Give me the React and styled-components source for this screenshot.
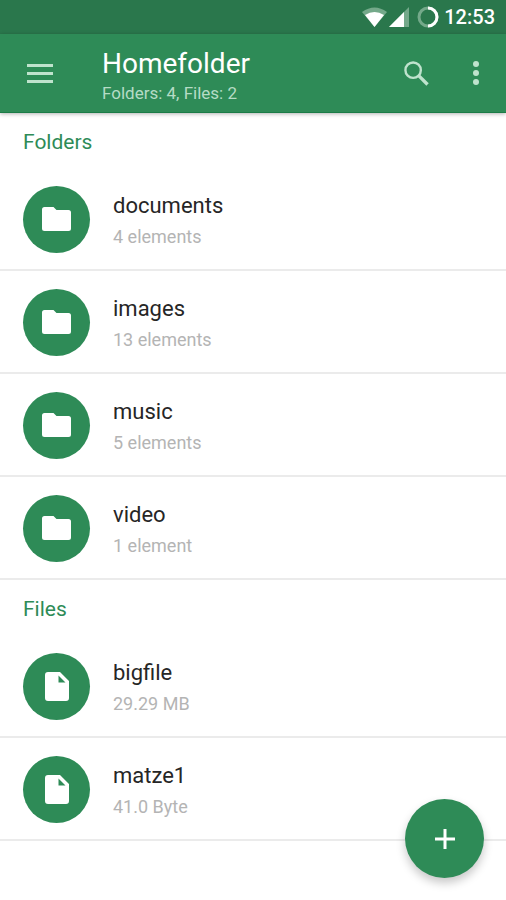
import React from 'react'
import { createGlobalStyle, styled } from 'styled-components'

const GlobalStyle = createGlobalStyle`
   * {
      box-sizing: border-box;
   }
   body {
      margin: 0;
      background-color: #fff;
      font-family: Roboto, "Liberation Sans", sans-serif;
   }
   h1, h2, h3, p, ul {
      margin: 0;
      padding: 0;
      font-weight: 400;
   }
`

const Page = styled.div`
   min-height: 100vh;
   overflow: hidden;
`

const StatusBar = styled.div`
   display: flex;
   align-items: center;
   justify-content: flex-end;
   height: 34px;
   padding: 0 11px;
   background-color: #2a774c;
   color: #fff;
`

const StatusIcon = styled.svg`
   display: block;
   margin-right: ${(props) => props.$gap}px;
`

const Clock = styled.time`
   font-size: 20px;
   font-weight: 500;
   line-height: 36px;
`

const Toolbar = styled.header`
   display: flex;
   align-items: center;
   height: 79px;
   padding: 0 10px 0 20px;
   background-color: #2e8b57;
   color: #fff;
   border-bottom: 1px solid #1c7c47;
   box-shadow: 0 1px 4px rgba(0, 0, 0, 0.3);
`

const IconButton = styled.button`
   display: flex;
   align-items: center;
   justify-content: center;
   width: 40px;
   height: 40px;
   padding: 0;
   border: 0;
   background: none;
   color: #bfe3cd;
   cursor: pointer;
`

const Heading = styled.div`
   flex: 1;
   margin-left: 42px;
   padding-top: 5px;
   h1 {
      font-size: 28px;
      line-height: 34px;
   }
   p {
      color: #b5dcc5;
      font-size: 17px;
      line-height: 24px;
   }
`

const Actions = styled.div`
   display: flex;
   gap: 20px;
`

const SectionTitle = styled.h2`
   height: 55px;
   padding: 0 23px;
   color: #2e8b57;
   font-size: 21px;
   line-height: 58px;
`

const List = styled.ul`
   list-style: none;
`

const Row = styled.li`
   display: flex;
   align-items: center;
   height: 103px;
   padding: 1px 23px 0;
   border-bottom: 2px solid #ebebeb;
`

const Avatar = styled.span`
   display: flex;
   align-items: center;
   justify-content: center;
   width: 67px;
   height: 67px;
   margin-right: 23px;
   border-radius: 50%;
   background-color: #2e8b57;
   color: #fff;
`

const Info = styled.div`
   padding-top: 4px;
`

const Name = styled.h3`
   color: #262626;
   font-size: 22px;
   line-height: 32px;
`

const Detail = styled.p`
   color: #b4b4b4;
   font-size: 18px;
   line-height: 30px;
`

const AddButton = styled.button`
   position: fixed;
   right: 22px;
   bottom: 22px;
   display: flex;
   align-items: center;
   justify-content: center;
   width: 79px;
   height: 79px;
   padding: 0;
   border: 0;
   border-radius: 50%;
   background-color: #2e8b57;
   color: #fff;
   box-shadow: 0 5px 10px rgba(0, 0, 0, 0.22);
   cursor: pointer;
`

const FolderIcon = () => (
   <svg width='29' height='24' viewBox='0 0 29 24' fill='currentColor'>
      <path d='M2.5 0H11.5L14.5 3H26.5A2.5 2.5 0 0 1 29 5.5V21.5A2.5 2.5 0 0 1 26.5 24H2.5A2.5 2.5 0 0 1 0 21.5V2.5A2.5 2.5 0 0 1 2.5 0Z' />
   </svg>
)

const FileIcon = () => (
   <svg width='24' height='29' viewBox='0 0 24 29' fill='currentColor'>
      <path
         fillRule='evenodd'
         d='M3 0H15L24 9V26A3 3 0 0 1 21 29H3A3 3 0 0 1 0 26V3A3 3 0 0 1 3 0ZM13.5 3.5V10.5H20.5Z'
      />
   </svg>
)

const folders = [
   { name: 'documents', detail: '4 elements' },
   { name: 'images', detail: '13 elements' },
   { name: 'music', detail: '5 elements' },
   { name: 'video', detail: '1 element' },
]

const files = [
   { name: 'bigfile', detail: '29.29 MB' },
   { name: 'matze1', detail: '41.0 Byte' },
]

const Entries = ({ title, items, icon }) => (
   <section>
      <SectionTitle>{title}</SectionTitle>
      <List>
         {items.map((item) => (
            <Row key={item.name}>
               <Avatar>{icon}</Avatar>
               <Info>
                  <Name>{item.name}</Name>
                  <Detail>{item.detail}</Detail>
               </Info>
            </Row>
         ))}
      </List>
   </section>
)

const App = () => {
   return (
      <Page>
         <GlobalStyle />
         <StatusBar>
            <StatusIcon $gap={2} width='25' height='20' viewBox='0 0 25 20'>
               <path d='M0 5Q12.5 -4 25 5L12.5 20Z' fill='#74a98a' />
               <path d='M3 8Q12.5 2 22 8L12.5 20Z' fill='#fff' />
            </StatusIcon>
            <StatusIcon $gap={8} width='20' height='20' viewBox='0 0 20 20'>
               <path d='M20 0V20H0Z' fill='#74a98a' />
               <path d='M15 5V20H0Z' fill='#fff' />
            </StatusIcon>
            <StatusIcon
               $gap={5}
               width='22'
               height='22'
               viewBox='0 0 22 22'
               fill='none'
               strokeWidth='3'
            >
               <circle cx='11' cy='11' r='9' stroke='#74a98a' />
               <path d='M11 2A9 9 0 0 1 11 20' stroke='#fff' />
            </StatusIcon>
            <Clock>12:53</Clock>
         </StatusBar>
         <Toolbar>
            <IconButton aria-label='Open menu'>
               <svg width='26' height='19' viewBox='0 0 26 19' fill='currentColor'>
                  <path d='M0 0H26V3H0ZM0 8H26V11H0ZM0 16H26V19H0Z' />
               </svg>
            </IconButton>
            <Heading>
               <h1>Homefolder</h1>
               <p>Folders: 4, Files: 2</p>
            </Heading>
            <Actions>
               <IconButton aria-label='Search'>
                  <svg
                     width='25'
                     height='25'
                     viewBox='0 0 26 26'
                     fill='none'
                     stroke='currentColor'
                     strokeWidth='2.5'
                  >
                     <circle cx='9.5' cy='9.5' r='8' />
                     <path d='M15 15L24.5 24.5' strokeWidth='3.5' />
                  </svg>
               </IconButton>
               <IconButton aria-label='More options'>
                  <svg width='6' height='24' viewBox='0 0 6 24' fill='currentColor'>
                     <circle cx='3' cy='3' r='3' />
                     <circle cx='3' cy='12' r='3' />
                     <circle cx='3' cy='21' r='3' />
                  </svg>
               </IconButton>
            </Actions>
         </Toolbar>
         <main>
            <Entries title='Folders' items={folders} icon={<FolderIcon />} />
            <Entries title='Files' items={files} icon={<FileIcon />} />
         </main>
         <AddButton aria-label='Add'>
            <svg width='20' height='20' viewBox='0 0 20 20' stroke='currentColor' strokeWidth='3'>
               <path d='M10 0V20M0 10H20' />
            </svg>
         </AddButton>
      </Page>
   )
}

export default App
